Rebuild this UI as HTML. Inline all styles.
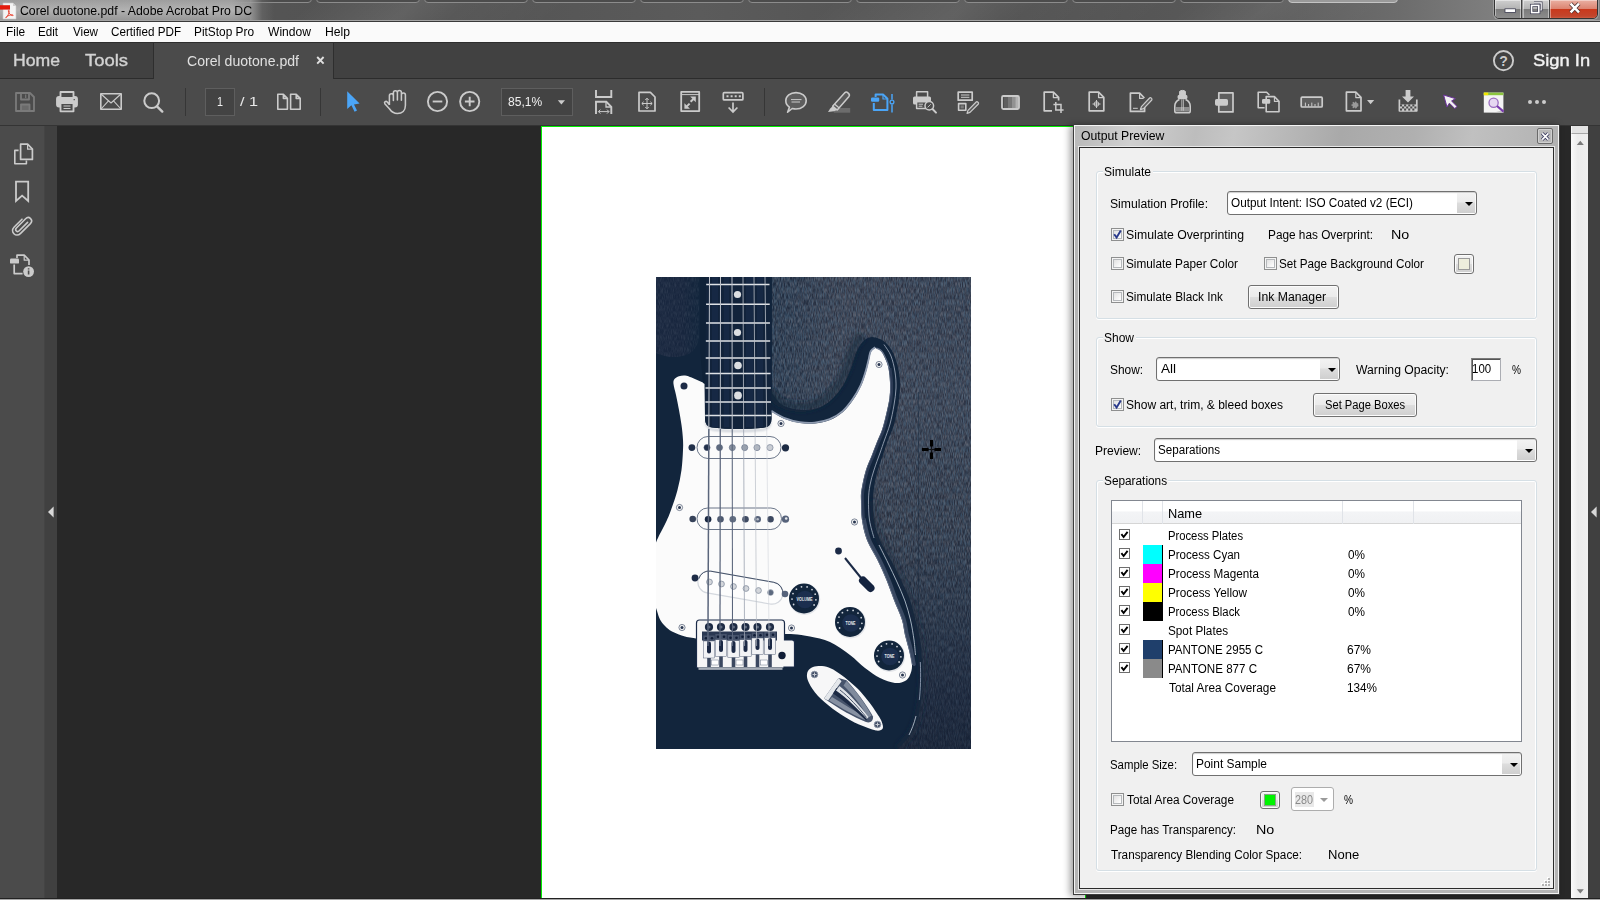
<!DOCTYPE html>
<html lang="en"><head><meta charset="utf-8"><title>Corel duotone.pdf - Adobe Acrobat Pro DC</title>
<style>
html,body{margin:0;padding:0}
body{width:1600px;height:900px;overflow:hidden;position:relative;background:#282828;font-family:"Liberation Sans",sans-serif;font-size:12px}
div,span,svg{position:absolute;box-sizing:border-box}
.t{white-space:pre;line-height:1;transform-origin:0 0}
#title{left:0;top:0;width:1600px;height:22px;background:#545454;overflow:hidden}
#title .dk{left:0;top:0;width:1600px;height:22px;background:linear-gradient(90deg,#585858 0,#525252 420px,#5b5b5b 700px,#505050 1000px,#5a5a5a 1250px,#6c6c6c 1400px,#7e7e7e 1490px,#808080 1600px)}
#title .stk{top:-10px;height:44px;background:linear-gradient(90deg,rgba(255,255,255,0),rgba(255,255,255,.09) 40%,rgba(255,255,255,.03) 60%,rgba(255,255,255,0));transform:skewX(-50deg)}
#title .ttab{top:-6px;height:9px;border:1px solid #8c8c8c;border-radius:4px;background:#4c4c4c}
#title .ttab.lt{background:#9a9a9a;border-color:#c4c4c4}
#title .glow{left:0;top:0;width:290px;height:22px;background:linear-gradient(90deg,#a6a6a6 0,#a8a8a8 232px,rgba(160,160,160,.85) 250px,rgba(120,120,120,.35) 262px,rgba(90,90,90,0) 274px);}
#title .glow:after{content:"";position:absolute;left:0;top:0;width:250px;height:22px;background:linear-gradient(rgba(0,0,0,.06),rgba(255,255,255,.12) 45%,rgba(0,0,0,.12))}
#title .ln1{left:0;top:20px;width:1600px;height:1px;background:#a4a4a4}
#title .ln2{left:0;top:21px;width:1600px;height:1px;background:#3a3a3a}
#wbtn{left:1494px;top:-1px;width:104px;height:19.500px;border:1px solid #333;border-radius:0 0 5px 5px;overflow:hidden;background:#999;box-shadow:0 0 0 1px rgba(255,255,255,.25)}
#wbtn .b1{left:0;top:0;width:27px;height:19px;background:linear-gradient(#cfcfcf,#b4b4b4 45%,#7c7c7c 50%,#8e8e8e);border-right:1px solid #444;box-shadow:inset 0 0 0 1px rgba(255,255,255,.45)}
#wbtn .b2{left:28px;top:0;width:27px;height:19px;background:linear-gradient(#cfcfcf,#b4b4b4 45%,#7c7c7c 50%,#8e8e8e);border-right:1px solid #444;box-shadow:inset 0 0 0 1px rgba(255,255,255,.45)}
#wbtn .b3{left:55px;top:0;width:48px;height:19px;background:linear-gradient(#eab0a2,#dc8572 45%,#c9391c 50%,#c2452c 85%,#d0664c);box-shadow:inset 0 0 0 1px rgba(255,255,255,.4)}
#menu{left:0;top:22px;width:1600px;height:20px;background:#fafafa}
#tabs{left:0;top:42px;width:1600px;height:37px;background:#414141;border-top:1px solid #2e2e2e;border-bottom:1px solid #2c2c2c}
#tab{left:153px;top:43px;width:181px;height:36px;background:#4b4b4b;border-left:1px solid #2e2e2e;border-right:1px solid #2e2e2e}
#tool{left:0;top:79px;width:1600px;height:47px;background:#4b4b4b;border-bottom:1px solid #343434}
.sep{width:1px;height:28px;top:88px;background:#363636}
.tbox{background:#434343;border:1px solid #5e5e5e}
#nav{left:0;top:126px;width:45px;height:772px;background:#4b4b4b;border-right:1px solid #444}
#strip{left:45px;top:126px;width:12px;height:772px;background:#404040}
#page{left:541px;top:126px;width:545px;height:772px;background:#fff;border:1px solid #00ee00;border-bottom:none}
#rstrip{left:1588px;top:126px;width:12px;height:772px;background:#404040}
#vscroll{left:1571px;top:126px;width:17px;height:772px;background:linear-gradient(90deg,#fafafa,#ececec 40%,#f0f0f0)}
#botline{left:0;top:898px;width:1600px;height:1px;background:#222}
#botline2{left:0;top:899px;width:1600px;height:1px;background:#a6a6a6}
/* panel */
#panel{left:1073px;top:124px;width:487px;height:771px;background:#b4b4b4;border:1px solid #3c3c3c;box-shadow:-3px 1px 7px rgba(0,0,0,.38)}
#panel .hi{left:0;top:0;width:485px;height:769px;border:1px solid #f4f4f4}
#ptitle{left:1px;top:1px;width:483px;height:21px;background:linear-gradient(100deg,#b9b9b9,#d0d0d0 12%,#bdbdbd 25%,#c6c6c6 33%,#a9a9a9 55%,#b0b0b0 70%,#c0c0c0 82%,#b2b2b2 100%)}
#pin{left:5px;top:22px;width:475px;height:742px;background:#f0f0f0;border:1px solid #2b2b2b;box-shadow:0 0 0 1px #e8e8e8}
.grp{border:1px solid #d5dfe5;border-radius:3px;box-shadow:inset 1px 1px 0 #fff, inset -1px 0 0 #fff, 0 1px 0 #fff}
.lbl{background:#f0f0f0;height:14px}
.combo{background:#fff;border:1px solid #707070;border-radius:3px;box-shadow:inset 0 1px 1px #ccc}
.combo .btn{right:1px;top:1px;bottom:1px;width:18px;background:linear-gradient(#f2f2f2,#ebebeb 45%,#dddddd 50%,#cfcfcf);border-left:0}
.combo .arr{right:3.5px;top:9px;width:0;height:0;border-left:4px solid transparent;border-right:4px solid transparent;border-top:4px solid #000}
.pbtn{border:1px solid #707070;border-radius:3px;background:linear-gradient(#f2f2f2,#ebebeb 48%,#dddddd 52%,#cfcfcf);box-shadow:inset 0 0 0 1px #fcfcfc}
.cb{width:13px;height:13px;border:1px solid #8e8f8f;background:linear-gradient(135deg,#d8d8d8,#fff 80%);box-shadow:inset 0 0 0 1px #f4f4f4, inset 0 0 0 2px #b5b8bb}
.cbs{width:11px;height:11px;border:1px solid #6e6e6e;background:#fff}
.inp{background:#fff;border:1px solid #abadb3;border-top-color:#7a7a7a;border-left-color:#8a8a8a;box-shadow:inset 1px 1px 0 #555}
.list{background:#fff;border:1px solid #828790}
.lhead{background:linear-gradient(#fff,#fff 45%,#f3f4f6 50%,#f0f1f3);border-bottom:1px solid #d5d5d5}
.lsep{background:#e0e3e8}
.sw{border-right:1px solid #000}
.dis{background:#fff;border-color:#adadad;box-shadow:none}
.pclose{border:1px solid #6a6a6a;border-radius:2px;background:#b9b9b9;box-shadow:inset 0 0 0 1px #d0d0d0}
#vscroll .sp{left:0;top:0;width:17px;height:8px;background:#e3e3e3;border-bottom:1px solid #a8a8a8;border-left:1px solid #f8f8f8}

</style></head>
<body>
<div id="title">
<div class="dk"></div>
<div class="stk" style="left:300px;width:260px"></div><div class="stk" style="left:820px;width:340px"></div><div class="stk" style="left:1180px;width:200px;opacity:.6"></div>
<div class="ttab" style="left:-20px;width:104px"></div><div class="ttab" style="left:88px;width:116px"></div><div class="ttab" style="left:208px;width:104px"></div><div class="ttab" style="left:316px;width:104px"></div><div class="ttab" style="left:424px;width:104px"></div><div class="ttab" style="left:532px;width:104px"></div><div class="ttab" style="left:640px;width:104px"></div><div class="ttab" style="left:748px;width:104px"></div><div class="ttab" style="left:856px;width:104px"></div><div class="ttab" style="left:964px;width:104px"></div><div class="ttab" style="left:1072px;width:104px"></div><div class="ttab" style="left:1180px;width:104px"></div><div class="ttab lt" style="left:1288px;width:110px"></div>
<div class="glow"></div>
<div class="ln1"></div><div class="ln2"></div>
<svg style="left:0;top:2px" width="18" height="18" viewBox="0 0 18 18"><path d="M3 1 H13 L16 4 V17 H3 Z" fill="#f4f4f4" stroke="#c9c9c9" stroke-width=".6"/><path d="M13 1 V4 H16 Z" fill="#d0d0d0"/><rect x="0" y="3.200" width="10" height="4.400" fill="#e31b0c"/><path d="M6.200 15.600 C8 13.600 9.400 10.800 9.200 8.800 C9 7.800 8.200 8 8.300 9 C8.600 11 10.400 13.400 12.600 13.600 C13.600 13.600 13.400 12.800 12.400 12.800 C10.400 12.800 7.600 13.600 6.200 15 C5.600 15.800 5.800 16.100 6.200 15.600 Z" fill="none" stroke="#e8402e" stroke-width=".9"/></svg>
<div id="wbtn"><div class="b1"></div><div class="b2"></div><div class="b3"></div>
<svg style="left:0;top:0" width="104" height="19" viewBox="1494 0 104 19"><rect x="1504" y="8.800" width="10.600" height="3.600" fill="#fff" stroke="#3c3c50" stroke-width=".8"/><path d="M1533 2.800 H1540.200 V10 H1538" fill="none" stroke="#3c3c50" stroke-width="2.600"/><path d="M1533 2.800 H1540.200 V10 H1538" fill="none" stroke="#fff" stroke-width="1.200"/><rect x="1530.600" y="5.400" width="7.200" height="7.200" fill="none" stroke="#3c3c50" stroke-width="3"/><rect x="1530.600" y="5.400" width="7.200" height="7.200" fill="none" stroke="#fff" stroke-width="1.600"/><path d="M1569.600 3.600 L1578 12.400 M1578 3.600 L1569.600 12.400" stroke="#4a3030" stroke-width="4"/><path d="M1569.600 3.600 L1578 12.400 M1578 3.600 L1569.600 12.400" stroke="#fff" stroke-width="2.500"/></svg></div>
</div>
<div id="menu"></div>
<div id="tabs"></div><div id="tab"></div>
<div id="tool"></div>
<div class="sep" style="left:185px"></div><div class="sep" style="left:320px"></div><div class="sep" style="left:764px"></div>
<div class="tbox" style="left:205px;top:88px;width:30px;height:28px"></div>
<div class="tbox" style="left:501px;top:88px;width:72px;height:28px"></div>
<div id="nav"></div><div id="strip"></div>
<div id="page"></div>
<svg id="guitar" style="left:656px;top:277px" width="315" height="472" viewBox="656 277 315 472" font-family="'Liberation Sans',sans-serif">
<defs>
<filter id="grain" x="0" y="0" width="100%" height="100%"><feTurbulence type="fractalNoise" baseFrequency="1.0 0.17" numOctaves="2" seed="7" result="n"/><feColorMatrix type="matrix" values="0 0 0 0 .8  0 0 0 0 .82  0 0 0 0 .86  2.4 0 0 0 -0.9" result="m"/><feComposite in="m" in2="SourceGraphic" operator="in"/></filter>
<filter id="grainD" x="0" y="0" width="100%" height="100%"><feTurbulence type="fractalNoise" baseFrequency="0.9 0.15" numOctaves="2" seed="23" result="n"/><feColorMatrix type="matrix" values="0 0 0 0 .07  0 0 0 0 .145  0 0 0 0 .235  2.4 0 0 0 -0.9" result="m"/><feComposite in="m" in2="SourceGraphic" operator="in"/></filter>
<linearGradient id="wood" x1="0" y1="0" x2="0" y2="1"><stop offset="0" stop-color="#2e3444"/><stop offset=".26" stop-color="#323848"/><stop offset=".52" stop-color="#2a303f"/><stop offset=".73" stop-color="#222c3e"/><stop offset=".9" stop-color="#1a2438"/><stop offset="1" stop-color="#172134"/></linearGradient>
<linearGradient id="woodl" x1="0" y1="0" x2="1" y2="0"><stop offset="0" stop-color="#1a2840"/><stop offset=".6" stop-color="#18263e"/><stop offset="1" stop-color="#12253c"/></linearGradient>
<linearGradient id="woodx" x1="0" y1="0" x2="1" y2="0"><stop offset="0" stop-color="#12253c" stop-opacity=".55"/><stop offset=".35" stop-color="#12253c" stop-opacity="0"/><stop offset="1" stop-color="#12253c" stop-opacity=".1"/></linearGradient>
<linearGradient id="jack" x1="0" y1="0" x2="1" y2="0"><stop offset="0" stop-color="#9aa3b2"/><stop offset=".3" stop-color="#e8eaee"/><stop offset=".45" stop-color="#4a566c"/><stop offset=".6" stop-color="#c9ced6"/><stop offset=".8" stop-color="#59657a"/><stop offset="1" stop-color="#aab2be"/></linearGradient>
<filter id="blur2" x="-20%" y="-20%" width="140%" height="140%"><feGaussianBlur stdDeviation="2.2"/></filter>
<linearGradient id="gmg" x1="0" y1="0" x2="0" y2="1"><stop offset="0" stop-color="#fff"/><stop offset=".55" stop-color="#fff"/><stop offset=".85" stop-color="#666"/><stop offset="1" stop-color="#555"/></linearGradient><mask id="gm" maskUnits="userSpaceOnUse" x="656" y="277" width="315" height="472"><rect x="656" y="277" width="315" height="472" fill="url(#gmg)"/></mask>
<filter id="blur1" x="-20%" y="-20%" width="140%" height="140%"><feGaussianBlur stdDeviation=".8"/></filter>
<clipPath id="gc"><rect x="656" y="277" width="315" height="472"/></clipPath>
</defs>
<g clip-path="url(#gc)">
<rect x="656" y="277" width="315" height="472" fill="#12253c"/>
<path d="M772 277 L772 393  C773.3 394.7 777.0 400.5 780.0 403.0 C783.0 405.5 785.8 406.8 790.0 408.0 C794.2 409.2 800.0 410.2 805.0 410.0 C810.0 409.8 815.3 409.0 820.0 407.0 C824.7 405.0 829.2 401.7 833.0 398.0 C836.8 394.3 840.2 389.7 843.0 385.0 C845.8 380.3 848.0 375.0 850.0 370.0 C852.0 365.0 853.3 359.2 855.0 355.0 C856.7 350.8 858.2 347.7 860.0 345.0 C861.8 342.3 864.0 340.3 866.0 339.0 C868.0 337.7 869.7 337.0 872.0 337.0 C874.3 337.0 877.3 337.7 880.0 339.0 C882.7 340.3 885.6 342.2 888.0 345.0 C890.4 347.8 892.7 351.5 894.5 356.0 C896.3 360.5 898.1 366.7 899.0 372.0 C899.9 377.3 900.2 382.5 900.0 388.0 C899.8 393.5 899.0 398.8 898.0 405.0 C897.0 411.2 895.7 419.2 894.0 425.0 C892.3 430.8 889.7 435.5 888.0 440.0 C886.3 444.5 885.7 447.0 884.0 452.0 C882.3 457.0 879.6 464.5 878.0 470.0 C876.4 475.5 875.3 480.0 874.5 485.0 C873.7 490.0 873.1 494.2 873.0 500.0 C872.9 505.8 872.8 513.3 874.0 520.0 C875.2 526.7 877.2 533.3 880.0 540.0 C882.8 546.7 887.5 553.3 891.0 560.0 C894.5 566.7 897.8 573.3 901.0 580.0 C904.2 586.7 907.6 593.3 910.0 600.0 C912.4 606.7 913.8 613.3 915.5 620.0 C917.2 626.7 918.9 633.3 920.0 640.0 C921.1 646.7 921.6 653.3 922.0 660.0 C922.4 666.7 922.7 673.3 922.5 680.0 C922.3 686.7 921.9 693.3 921.0 700.0 C920.1 706.7 918.8 714.2 917.0 720.0 C915.2 725.8 913.2 730.2 910.0 735.0 C906.8 739.8 900.0 746.7 898.0 749.0 L971 749 L971 277 Z" fill="url(#wood)"/>
<path d="M772 277 L772 393  C773.3 394.7 777.0 400.5 780.0 403.0 C783.0 405.5 785.8 406.8 790.0 408.0 C794.2 409.2 800.0 410.2 805.0 410.0 C810.0 409.8 815.3 409.0 820.0 407.0 C824.7 405.0 829.2 401.7 833.0 398.0 C836.8 394.3 840.2 389.7 843.0 385.0 C845.8 380.3 848.0 375.0 850.0 370.0 C852.0 365.0 853.3 359.2 855.0 355.0 C856.7 350.8 858.2 347.7 860.0 345.0 C861.8 342.3 864.0 340.3 866.0 339.0 C868.0 337.7 869.7 337.0 872.0 337.0 C874.3 337.0 877.3 337.7 880.0 339.0 C882.7 340.3 885.6 342.2 888.0 345.0 C890.4 347.8 892.7 351.5 894.5 356.0 C896.3 360.5 898.1 366.7 899.0 372.0 C899.9 377.3 900.2 382.5 900.0 388.0 C899.8 393.5 899.0 398.8 898.0 405.0 C897.0 411.2 895.7 419.2 894.0 425.0 C892.3 430.8 889.7 435.5 888.0 440.0 C886.3 444.5 885.7 447.0 884.0 452.0 C882.3 457.0 879.6 464.5 878.0 470.0 C876.4 475.5 875.3 480.0 874.5 485.0 C873.7 490.0 873.1 494.2 873.0 500.0 C872.9 505.8 872.8 513.3 874.0 520.0 C875.2 526.7 877.2 533.3 880.0 540.0 C882.8 546.7 887.5 553.3 891.0 560.0 C894.5 566.7 897.8 573.3 901.0 580.0 C904.2 586.7 907.6 593.3 910.0 600.0 C912.4 606.7 913.8 613.3 915.5 620.0 C917.2 626.7 918.9 633.3 920.0 640.0 C921.1 646.7 921.6 653.3 922.0 660.0 C922.4 666.7 922.7 673.3 922.5 680.0 C922.3 686.7 921.9 693.3 921.0 700.0 C920.1 706.7 918.8 714.2 917.0 720.0 C915.2 725.8 913.2 730.2 910.0 735.0 C906.8 739.8 900.0 746.7 898.0 749.0 L971 749 L971 277 Z" fill="url(#woodx)"/>
<path d="M656 277 L699 277 L699 338 C697 350 690 355 680 356.5 C670 358 662 356 656 353 Z" fill="url(#woodl)"/>
<g opacity=".26" mask="url(#gm)"><path d="M772 277 L772 393  C773.3 394.7 777.0 400.5 780.0 403.0 C783.0 405.5 785.8 406.8 790.0 408.0 C794.2 409.2 800.0 410.2 805.0 410.0 C810.0 409.8 815.3 409.0 820.0 407.0 C824.7 405.0 829.2 401.7 833.0 398.0 C836.8 394.3 840.2 389.7 843.0 385.0 C845.8 380.3 848.0 375.0 850.0 370.0 C852.0 365.0 853.3 359.2 855.0 355.0 C856.7 350.8 858.2 347.7 860.0 345.0 C861.8 342.3 864.0 340.3 866.0 339.0 C868.0 337.7 869.7 337.0 872.0 337.0 C874.3 337.0 877.3 337.7 880.0 339.0 C882.7 340.3 885.6 342.2 888.0 345.0 C890.4 347.8 892.7 351.5 894.5 356.0 C896.3 360.5 898.1 366.7 899.0 372.0 C899.9 377.3 900.2 382.5 900.0 388.0 C899.8 393.5 899.0 398.8 898.0 405.0 C897.0 411.2 895.7 419.2 894.0 425.0 C892.3 430.8 889.7 435.5 888.0 440.0 C886.3 444.5 885.7 447.0 884.0 452.0 C882.3 457.0 879.6 464.5 878.0 470.0 C876.4 475.5 875.3 480.0 874.5 485.0 C873.7 490.0 873.1 494.2 873.0 500.0 C872.9 505.8 872.8 513.3 874.0 520.0 C875.2 526.7 877.2 533.3 880.0 540.0 C882.8 546.7 887.5 553.3 891.0 560.0 C894.5 566.7 897.8 573.3 901.0 580.0 C904.2 586.7 907.6 593.3 910.0 600.0 C912.4 606.7 913.8 613.3 915.5 620.0 C917.2 626.7 918.9 633.3 920.0 640.0 C921.1 646.7 921.6 653.3 922.0 660.0 C922.4 666.7 922.7 673.3 922.5 680.0 C922.3 686.7 921.9 693.3 921.0 700.0 C920.1 706.7 918.8 714.2 917.0 720.0 C915.2 725.8 913.2 730.2 910.0 735.0 C906.8 739.8 900.0 746.7 898.0 749.0 L971 749 L971 277 Z" fill="#fff" filter="url(#grain)"/></g>
<g opacity=".5" mask="url(#gm)"><path d="M772 277 L772 393  C773.3 394.7 777.0 400.5 780.0 403.0 C783.0 405.5 785.8 406.8 790.0 408.0 C794.2 409.2 800.0 410.2 805.0 410.0 C810.0 409.8 815.3 409.0 820.0 407.0 C824.7 405.0 829.2 401.7 833.0 398.0 C836.8 394.3 840.2 389.7 843.0 385.0 C845.8 380.3 848.0 375.0 850.0 370.0 C852.0 365.0 853.3 359.2 855.0 355.0 C856.7 350.8 858.2 347.7 860.0 345.0 C861.8 342.3 864.0 340.3 866.0 339.0 C868.0 337.7 869.7 337.0 872.0 337.0 C874.3 337.0 877.3 337.7 880.0 339.0 C882.7 340.3 885.6 342.2 888.0 345.0 C890.4 347.8 892.7 351.5 894.5 356.0 C896.3 360.5 898.1 366.7 899.0 372.0 C899.9 377.3 900.2 382.5 900.0 388.0 C899.8 393.5 899.0 398.8 898.0 405.0 C897.0 411.2 895.7 419.2 894.0 425.0 C892.3 430.8 889.7 435.5 888.0 440.0 C886.3 444.5 885.7 447.0 884.0 452.0 C882.3 457.0 879.6 464.5 878.0 470.0 C876.4 475.5 875.3 480.0 874.5 485.0 C873.7 490.0 873.1 494.2 873.0 500.0 C872.9 505.8 872.8 513.3 874.0 520.0 C875.2 526.7 877.2 533.3 880.0 540.0 C882.8 546.7 887.5 553.3 891.0 560.0 C894.5 566.7 897.8 573.3 901.0 580.0 C904.2 586.7 907.6 593.3 910.0 600.0 C912.4 606.7 913.8 613.3 915.5 620.0 C917.2 626.7 918.9 633.3 920.0 640.0 C921.1 646.7 921.6 653.3 922.0 660.0 C922.4 666.7 922.7 673.3 922.5 680.0 C922.3 686.7 921.9 693.3 921.0 700.0 C920.1 706.7 918.8 714.2 917.0 720.0 C915.2 725.8 913.2 730.2 910.0 735.0 C906.8 739.8 900.0 746.7 898.0 749.0 L971 749 L971 277 Z" fill="#fff" filter="url(#grainD)"/></g>
<g opacity=".09"><path d="M656 277 L699 277 L699 338 C697 350 690 355 680 356.5 C670 358 662 356 656 353 Z" fill="#fff" filter="url(#grain)"/></g>
<path d="M918.5 392 V749" stroke="#12253c" stroke-opacity=".4" stroke-width="1"/>
<path d="M938.500 277 V749" stroke="#12253c" stroke-opacity=".15" stroke-width="1"/>
<path d="M873 500 C873.2 503.3 872.8 513.3 874.0 520.0 C875.2 526.7 877.2 533.3 880.0 540.0 C882.8 546.7 887.5 553.3 891.0 560.0 C894.5 566.7 897.8 573.3 901.0 580.0 C904.2 586.7 907.6 593.3 910.0 600.0 C912.4 606.7 913.8 613.3 915.5 620.0 C917.2 626.7 918.9 633.3 920.0 640.0 C921.1 646.7 921.6 653.3 922.0 660.0 C922.4 666.7 922.7 673.3 922.5 680.0 C922.3 686.7 921.9 693.3 921.0 700.0 C920.1 706.7 918.8 714.2 917.0 720.0 C915.2 725.8 913.2 730.2 910.0 735.0 C906.8 739.8 900.0 746.7 898.0 749.0" fill="none" stroke="#12253c" stroke-opacity=".35" stroke-width="9" filter="url(#blur2)"/>
<path d="M769 390 C770.3 391.7 774.0 397.5 777.0 400.0 C780.0 402.5 782.8 403.8 787.0 405.0 C791.2 406.2 797.0 407.2 802.0 407.0 C807.0 406.8 812.3 406.0 817.0 404.0 C821.7 402.0 826.2 398.7 830.0 395.0 C833.8 391.3 837.2 386.7 840.0 382.0 C842.8 377.3 845.0 372.0 847.0 367.0 C849.0 362.0 850.3 356.2 852.0 352.0 C853.7 347.8 855.2 344.7 857.0 342.0 C858.8 339.3 862.0 337.0 863.0 336.0" fill="none" stroke="#12253c" stroke-opacity=".55" stroke-width="10" filter="url(#blur2)"/>
<path d="M704.5 383.3 L705 419 Q705 426.5 712 427.6 Q738 430.6 764.5 427.6 Q771.5 426.5 771.5 419 L771.5 411.8  C773.8 413.0 780.2 417.1 785.0 419.0 C789.8 420.9 795.0 422.2 800.0 423.0 C805.0 423.8 810.0 424.0 815.0 423.5 C820.0 423.0 825.3 421.9 830.0 420.0 C834.7 418.1 839.2 415.3 843.0 412.0 C846.8 408.7 850.0 404.3 853.0 400.0 C856.0 395.7 858.8 390.7 861.0 386.0 C863.2 381.3 864.7 376.3 866.0 372.0 C867.3 367.7 868.2 363.3 869.0 360.0 C869.8 356.7 869.9 354.0 871.0 352.0 C872.1 350.0 873.8 348.2 875.5 348.0 C877.2 347.8 879.4 349.3 881.0 351.0 C882.6 352.7 883.8 355.2 885.0 358.0 C886.2 360.8 887.7 364.0 888.5 368.0 C889.3 372.0 889.8 377.0 890.0 382.0 C890.2 387.0 890.2 392.5 889.5 398.0 C888.8 403.5 887.2 409.7 886.0 415.0 C884.8 420.3 883.5 425.5 882.0 430.0 C880.5 434.5 878.7 437.8 877.0 442.0 C875.3 446.2 873.8 450.3 872.0 455.0 C870.2 459.7 867.8 464.2 866.0 470.0 C864.2 475.8 862.3 485.0 861.5 490.0 C860.7 495.0 860.9 495.0 861.0 500.0 C861.1 505.0 861.0 513.3 862.0 520.0 C863.0 526.7 864.4 533.3 867.0 540.0 C869.6 546.7 874.2 553.3 877.5 560.0 C880.8 566.7 883.8 573.3 886.5 580.0 C889.2 586.7 891.4 593.3 894.0 600.0 C896.6 606.7 900.2 614.2 902.0 620.0 C903.8 625.8 903.8 630.0 905.0 635.0 C906.2 640.0 907.8 645.0 909.0 650.0 C910.2 655.0 911.8 660.8 912.0 665.0 C912.2 669.2 911.2 672.3 910.0 675.0 C908.8 677.7 907.5 679.7 905.0 681.0 C902.5 682.3 899.2 683.5 895.0 683.0 C890.8 682.5 885.0 680.5 880.0 678.0 C875.0 675.5 870.0 671.8 865.0 668.0 C860.0 664.2 855.8 659.3 850.0 655.0 C844.2 650.7 836.7 645.1 830.0 642.0 C823.3 638.9 816.0 637.8 810.0 636.5 C804.0 635.2 798.3 634.6 794.0 634.2 C789.7 633.8 785.7 634.0 784.0 634.0 L697 638.5  C695.0 638.2 689.2 637.7 685.0 636.5 C680.8 635.3 675.3 633.2 672.0 631.5 C668.7 629.8 667.0 628.0 665.0 626.0 C663.0 624.0 661.3 622.0 660.0 619.5 C658.7 617.0 658.0 613.9 657.0 611.0 C656.0 608.1 654.5 603.5 654.0 602.0 L654 548  C654.5 546.7 655.7 543.0 657.0 540.0 C658.3 537.0 660.3 533.3 662.0 530.0 C663.7 526.7 665.5 523.3 667.0 520.0 C668.5 516.7 669.2 515.0 671.0 510.0 C672.8 505.0 675.8 496.7 677.5 490.0 C679.2 483.3 680.6 476.7 681.5 470.0 C682.4 463.3 682.8 455.0 683.0 450.0 C683.2 445.0 683.2 444.2 683.0 440.0 C682.8 435.8 682.2 430.0 681.5 425.0 C680.8 420.0 679.9 415.0 679.0 410.0 C678.1 405.0 676.9 399.3 676.0 395.0 C675.1 390.7 673.8 386.7 673.5 384.0 C673.2 381.3 673.6 380.3 674.5 379.0 C675.4 377.7 677.2 376.8 679.0 376.2 C680.8 375.6 683.0 375.3 685.0 375.5 C687.0 375.7 690.0 377.0 691.0 377.3 Z" fill="#fbfbfb"/>
<path d="M771.2 410.9 C773.5 412.1 780.0 416.2 784.7 418.1 C789.5 420.0 794.7 421.4 799.7 422.1 C804.7 422.9 809.7 423.1 814.7 422.6 C819.7 422.1 825.0 421.0 829.7 419.1 C834.4 417.2 838.9 414.4 842.7 411.1 C846.5 407.8 849.7 403.4 852.7 399.1 C855.7 394.8 858.5 389.8 860.7 385.1 C862.9 380.4 864.4 375.4 865.7 371.1 C867.0 366.8 867.9 362.4 868.7 359.1 C869.5 355.8 869.6 353.1 870.7 351.1 C871.8 349.1 874.5 347.8 875.2 347.1" fill="none" stroke="#8f9bb0" stroke-width="1.8"/>
<path d="M876.1 348 C877.0 348.5 880.0 349.3 881.6 351.0 C883.2 352.7 884.4 355.2 885.6 358.0 C886.9 360.8 888.3 364.0 889.1 368.0 C889.9 372.0 890.4 377.0 890.6 382.0 C890.8 387.0 890.8 392.5 890.1 398.0 C889.4 403.5 887.9 409.7 886.6 415.0 C885.4 420.3 884.1 425.5 882.6 430.0 C881.1 434.5 879.3 437.8 877.6 442.0 C875.9 446.2 874.4 450.3 872.6 455.0 C870.8 459.7 868.4 464.2 866.6 470.0 C864.9 475.8 862.9 485.0 862.1 490.0 C861.3 495.0 861.5 495.0 861.6 500.0 C861.7 505.0 861.6 513.3 862.6 520.0 C863.6 526.7 865.0 533.3 867.6 540.0 C870.2 546.7 874.9 553.3 878.1 560.0 C881.4 566.7 884.4 573.3 887.1 580.0 C889.9 586.7 892.0 593.3 894.6 600.0 C897.2 606.7 900.8 614.2 902.6 620.0 C904.4 625.8 904.4 630.0 905.6 635.0 C906.8 640.0 908.4 645.0 909.6 650.0 C910.8 655.0 912.1 662.5 912.6 665.0" fill="none" stroke="#66738b" stroke-width="1.3"/>
<path d="M864.2 519.4 C865.0 522.7 866.6 532.7 869.2 539.4 C871.8 546.1 876.5 552.7 879.7 559.4 C883.0 566.1 886.0 572.7 888.7 579.4 C891.5 586.1 893.6 592.7 896.2 599.4 C898.8 606.1 902.4 613.6 904.2 619.4 C906.0 625.2 906.0 629.4 907.2 634.4 C908.4 639.4 910.0 644.4 911.2 649.4 C912.4 654.4 913.7 661.9 914.2 664.4" fill="none" stroke="#3a4962" stroke-width="3.2" stroke-linecap="round"/>
<path d="M890.3 368 C890.5 370.3 891.6 377.0 891.8 382.0 C892.0 387.0 892.0 392.5 891.3 398.0 C890.6 403.5 889.0 409.7 887.8 415.0 C886.5 420.3 885.3 425.5 883.8 430.0 C882.3 434.5 880.5 437.8 878.8 442.0 C877.1 446.2 875.6 450.3 873.8 455.0 C872.0 459.7 869.5 464.2 867.8 470.0 C866.0 475.8 864.1 485.0 863.3 490.0 C862.5 495.0 862.7 495.0 862.8 500.0 C862.9 505.0 863.6 516.7 863.8 520.0" fill="none" stroke="#2c3b55" stroke-width="2.4"/>
<path d="M884 344.5 C885.2 346.4 889.2 351.4 891.0 356.0 C892.8 360.6 894.2 366.7 895.0 372.0 C895.8 377.3 896.2 382.5 896.0 388.0 C895.8 393.5 895.0 399.0 894.0 405.0 C893.0 411.0 891.6 418.2 890.0 424.0 C888.4 429.8 886.2 435.2 884.5 440.0 C882.8 444.8 881.8 448.0 880.0 453.0 C878.2 458.0 875.7 464.7 874.0 470.0 C872.3 475.3 870.9 480.0 870.0 485.0 C869.1 490.0 868.6 494.2 868.5 500.0 C868.4 505.8 868.6 513.7 869.5 520.0 C870.4 526.3 873.2 535.0 874.0 538.0" fill="none" stroke="#aab4c4" stroke-width=".8"/>
<path d="M879 545 C880.5 548.0 885.0 556.8 888.0 563.0 C891.0 569.2 894.2 575.7 897.0 582.0 C899.8 588.3 902.8 594.7 905.0 601.0 C907.2 607.3 909.0 613.5 910.5 620.0 C912.0 626.5 913.2 634.2 914.0 640.0 C914.8 645.8 915.2 652.5 915.5 655.0" fill="none" stroke="#c8d0dc" stroke-width=".8"/>
<path d="M920.3 662 C921 676 920.5 690 919.3 700" fill="none" stroke="#8f9bb0" stroke-width=".9"/>
<path d="M916 716 C914 724 911.5 730 909 735" fill="none" stroke="#c8d0dc" stroke-width=".8"/>
<path d="M706 421 Q706 428.500 713 429.600 Q738 432.600 763.500 429.600 Q770.500 428.500 770.500 421" fill="none" stroke="#8a94a6" stroke-opacity=".5" stroke-width="1.600" filter="url(#blur1)"/>
<path d="M706 277 L770 277 L771.5 419 Q771.5 426.5 764.5 427.6 Q738 430.6 712 427.6 Q705 426.5 705 419 Z" fill="#12233b"/>
<path d="M700 277 L706 277 L705 384 L703 383 L700 350 Z" fill="#0f2137"/>
<rect x="712" y="277" width="6" height="150" fill="#22355a" opacity=".3"/>
<rect x="724" y="277" width="5" height="150" fill="#22355a" opacity=".3"/>
<rect x="746" y="277" width="7" height="150" fill="#22355a" opacity=".3"/>
<rect x="757" y="277" width="6" height="150" fill="#22355a" opacity=".3"/>
<line x1="706.2" y1="284.5" x2="769.5" y2="284.5" stroke="#dfe2e6" stroke-width="1.55"/>
<line x1="706.08" y1="304.3" x2="769.72" y2="304.3" stroke="#dfe2e6" stroke-width="1.55"/>
<line x1="705.96" y1="323" x2="769.94" y2="323" stroke="#dfe2e6" stroke-width="1.55"/>
<line x1="705.84" y1="341" x2="770.16" y2="341" stroke="#dfe2e6" stroke-width="1.55"/>
<line x1="705.72" y1="358" x2="770.38" y2="358" stroke="#dfe2e6" stroke-width="1.55"/>
<line x1="705.6" y1="373.5" x2="770.6" y2="373.5" stroke="#dfe2e6" stroke-width="1.55"/>
<line x1="705.48" y1="388" x2="770.82" y2="388" stroke="#dfe2e6" stroke-width="1.55"/>
<line x1="705.36" y1="402" x2="771.04" y2="402" stroke="#dfe2e6" stroke-width="1.55"/>
<line x1="705.24" y1="415.5" x2="771.26" y2="415.5" stroke="#dfe2e6" stroke-width="1.55"/>
<circle cx="737.5" cy="294.5" r="3.6" fill="#dcdee1"/>
<circle cx="737.5" cy="332.5" r="3.6" fill="#dcdee1"/>
<circle cx="738" cy="365.5" r="3.8" fill="#dcdee1"/>
<circle cx="738" cy="395.5" r="3.9" fill="#dcdee1"/>
<rect x="697" y="436.5" width="84" height="22" rx="11" fill="none" stroke="#46546c" stroke-width=".8"/>
<circle cx="707" cy="447.6" r="3.1" fill="#22314b" stroke="#55617a" stroke-width=".5"/>
<circle cx="719.5" cy="447.6" r="3.1" fill="#5e6a7e" stroke="#55617a" stroke-width=".5"/>
<circle cx="732.3" cy="447.6" r="3.1" fill="#87909f" stroke="#55617a" stroke-width=".5"/>
<circle cx="744.7" cy="447.6" r="3.1" fill="#98a0ad" stroke="#55617a" stroke-width=".5"/>
<circle cx="757" cy="447.6" r="3.1" fill="#b0b6c0" stroke="#55617a" stroke-width=".5"/>
<circle cx="770" cy="447.6" r="3.1" fill="#c9cdd4" stroke="#55617a" stroke-width=".5"/>
<circle cx="691.9" cy="447.6" r="3.4" fill="#22314b"/>
<circle cx="785.5" cy="447.8" r="3.6" fill="#1d2b44"/>
<rect x="697" y="508" width="84.500" height="21.5" rx="10.7" fill="none" stroke="#46546c" stroke-width=".8"/>
<circle cx="708.1" cy="519.2" r="3.3" fill="#1a2842"/>
<circle cx="720.5" cy="519.2" r="3.3" fill="#4d596f"/>
<circle cx="732.8" cy="519.2" r="3.3" fill="#626e82"/>
<circle cx="745.5" cy="519.2" r="3.3" fill="#3f4b63"/>
<circle cx="757.7" cy="519.2" r="3.3" fill="#56627a"/>
<circle cx="770.5" cy="519.2" r="3.3" fill="#3c4860"/>
<circle cx="757.700" cy="519.2" r="1.2" fill="#b8bec8"/>
<circle cx="692.7" cy="519" r="3.3" fill="#364259"/>
<circle cx="785.5" cy="519.2" r="3.6" fill="#56627a"/>
<circle cx="786.200" cy="518.500" r="1.300" fill="#e6e8ec"/>
<g transform="rotate(10 740 587)"><rect x="697.5" y="576.5" width="86" height="22" rx="11" fill="#fdfdfd" stroke="#d4d8de" stroke-width="1.2"/><path d="M698 586 A10.5 10.5 0 0 1 708.5 576.5 L772.5 576.5 A11 11 0 0 1 783.5 587.5" fill="none" stroke="#3e4c64" stroke-width=".9"/></g>
<circle cx="709.5" cy="582" r="2.9" fill="#d3d6db" stroke="#7a8596" stroke-width=".7"/>
<circle cx="721.5" cy="584" r="2.9" fill="#d3d6db" stroke="#7a8596" stroke-width=".7"/>
<circle cx="733.5" cy="586.5" r="2.9" fill="#d3d6db" stroke="#7a8596" stroke-width=".7"/>
<circle cx="746" cy="588.5" r="2.9" fill="#d3d6db" stroke="#7a8596" stroke-width=".7"/>
<circle cx="758.5" cy="590.5" r="2.9" fill="#d3d6db" stroke="#7a8596" stroke-width=".7"/>
<circle cx="770.5" cy="592.5" r="2.9" fill="#d3d6db" stroke="#7a8596" stroke-width=".7"/>
<circle cx="770.5" cy="592.5" r="2.6" fill="#5d6a80"/>
<circle cx="695" cy="578" r="3.4" fill="#1d2b46"/>
<circle cx="785" cy="594" r="3.3" fill="#55627a"/>
<circle cx="684" cy="386" r="3.5" fill="#1d2b46"/>
<circle cx="781" cy="423.5" r="3.1" fill="#f4f4f4" stroke="#4a5870" stroke-width=".7"/><circle cx="781" cy="423.5" r="1.5" fill="#27354f"/>
<circle cx="879" cy="364.5" r="3.1" fill="#f4f4f4" stroke="#4a5870" stroke-width=".7"/><circle cx="879" cy="364.5" r="1.5" fill="#27354f"/>
<circle cx="679.5" cy="507.5" r="3.1" fill="#f4f4f4" stroke="#4a5870" stroke-width=".7"/><circle cx="679.5" cy="507.5" r="1.5" fill="#27354f"/>
<circle cx="854.5" cy="522" r="3.1" fill="#f4f4f4" stroke="#4a5870" stroke-width=".7"/><circle cx="854.5" cy="522" r="1.5" fill="#27354f"/>
<circle cx="682" cy="627.5" r="3.1" fill="#f4f4f4" stroke="#4a5870" stroke-width=".7"/><circle cx="682" cy="627.5" r="1.5" fill="#27354f"/>
<circle cx="791.5" cy="628" r="3.1" fill="#f4f4f4" stroke="#4a5870" stroke-width=".7"/><circle cx="791.5" cy="628" r="1.5" fill="#27354f"/>
<circle cx="902.5" cy="675" r="3.1" fill="#f4f4f4" stroke="#4a5870" stroke-width=".7"/><circle cx="902.5" cy="675" r="1.5" fill="#27354f"/>
<circle cx="804.6" cy="599.3" r="15.6" fill="#e3e5e9"/>
<circle cx="804" cy="598.5" r="15" fill="#12253c"/>
<circle cx="805" cy="599.5" r="8.8" fill="#1b2e4e"/>
<circle cx="793.6" cy="604.5" r=".9" fill="#cfd4dc"/>
<circle cx="792.0" cy="599.1" r=".9" fill="#cfd4dc"/>
<circle cx="793.0" cy="593.6" r=".9" fill="#cfd4dc"/>
<circle cx="796.4" cy="589.2" r=".9" fill="#cfd4dc"/>
<circle cx="801.5" cy="586.8" r=".9" fill="#cfd4dc"/>
<circle cx="807.1" cy="586.9" r=".9" fill="#cfd4dc"/>
<circle cx="812.0" cy="589.6" r=".9" fill="#cfd4dc"/>
<circle cx="815.2" cy="594.2" r=".9" fill="#cfd4dc"/>
<circle cx="815.9" cy="599.8" r=".9" fill="#cfd4dc"/>
<circle cx="814.1" cy="605.0" r=".9" fill="#cfd4dc"/>
<text x="804.5" y="601.3" font-size="4.6" fill="#e6e8ec" text-anchor="middle" font-weight="700" textLength="16" lengthAdjust="spacingAndGlyphs">VOLUME</text>
<circle cx="850.6" cy="622.8" r="15.6" fill="#e3e5e9"/>
<circle cx="850" cy="622" r="15" fill="#12253c"/>
<circle cx="851" cy="623" r="8.8" fill="#1b2e4e"/>
<circle cx="839.6" cy="628.0" r=".9" fill="#cfd4dc"/>
<circle cx="838.0" cy="622.6" r=".9" fill="#cfd4dc"/>
<circle cx="839.0" cy="617.1" r=".9" fill="#cfd4dc"/>
<circle cx="842.4" cy="612.7" r=".9" fill="#cfd4dc"/>
<circle cx="847.5" cy="610.3" r=".9" fill="#cfd4dc"/>
<circle cx="853.1" cy="610.4" r=".9" fill="#cfd4dc"/>
<circle cx="858.0" cy="613.1" r=".9" fill="#cfd4dc"/>
<circle cx="861.2" cy="617.7" r=".9" fill="#cfd4dc"/>
<circle cx="861.9" cy="623.3" r=".9" fill="#cfd4dc"/>
<circle cx="860.1" cy="628.5" r=".9" fill="#cfd4dc"/>
<text x="850.5" y="624.8" font-size="5" fill="#e6e8ec" text-anchor="middle" font-weight="700" textLength="10" lengthAdjust="spacingAndGlyphs">TONE</text>
<circle cx="889.6" cy="656.3" r="15.6" fill="#e3e5e9"/>
<circle cx="889" cy="655.5" r="15" fill="#12253c"/>
<circle cx="890" cy="656.5" r="8.8" fill="#1b2e4e"/>
<circle cx="878.6" cy="661.5" r=".9" fill="#cfd4dc"/>
<circle cx="877.0" cy="656.1" r=".9" fill="#cfd4dc"/>
<circle cx="878.0" cy="650.6" r=".9" fill="#cfd4dc"/>
<circle cx="881.4" cy="646.2" r=".9" fill="#cfd4dc"/>
<circle cx="886.5" cy="643.8" r=".9" fill="#cfd4dc"/>
<circle cx="892.1" cy="643.9" r=".9" fill="#cfd4dc"/>
<circle cx="897.0" cy="646.6" r=".9" fill="#cfd4dc"/>
<circle cx="900.2" cy="651.2" r=".9" fill="#cfd4dc"/>
<circle cx="900.9" cy="656.8" r=".9" fill="#cfd4dc"/>
<circle cx="899.1" cy="662.0" r=".9" fill="#cfd4dc"/>
<text x="889.5" y="658.3" font-size="5" fill="#e6e8ec" text-anchor="middle" font-weight="700" textLength="10" lengthAdjust="spacingAndGlyphs">TONE</text>
<circle cx="838.5" cy="551" r="3.4" fill="#1b2a46"/>
<line x1="845" y1="558" x2="861.5" y2="578.5" stroke="#1b2a46" stroke-width="2"/>
<line x1="863" y1="580.5" x2="870.5" y2="588" stroke="#14233f" stroke-width="8" stroke-linecap="round"/>
<path d="M699.5 620 L781.5 620 Q784.5 620 784.5 623 L784.5 640 L792 640 Q794.5 640 794.5 642.5 L794.5 667 L784 667 L784 669.5 L698 669.5 L696.5 667 L696.5 623 Q696.5 620 699.5 620 Z" fill="#f6f6f6" stroke="#1a2a48" stroke-width="1.2"/>
<rect x="697" y="667.5" width="98" height="3" fill="#12253c"/>
<rect x="698.5" y="668.3" width="84" height="1.3" fill="#e8eaee"/>
<rect x="702" y="631.5" width="75" height="9" fill="#2a3852"/>
<circle cx="709" cy="627" r="4.1" fill="#1d2b44"/><circle cx="709" cy="627" r="1.5" fill="#5f6b80"/>
<rect x="703.3" y="641" width="11.4" height="17" fill="#f2f3f5" stroke="#5a667c" stroke-width=".5"/>
<rect x="703.3" y="635.5" width="11.4" height="5.5" fill="#46536b"/>
<circle cx="706" cy="638.2" r="1.3" fill="#101d36"/><circle cx="712" cy="638.2" r="1.3" fill="#101d36"/>
<rect x="707" y="641.5" width="4" height="12" rx="2" fill="#1a2844"/>
<rect x="707.2" y="658" width="3.6" height="9" fill="#3b4860"/>
<circle cx="721" cy="627" r="4.1" fill="#1d2b44"/><circle cx="721" cy="627" r="1.5" fill="#5f6b80"/>
<rect x="715.3" y="639.5" width="11.4" height="17" fill="#f2f3f5" stroke="#5a667c" stroke-width=".5"/>
<rect x="715.3" y="634" width="11.4" height="5.5" fill="#46536b"/>
<circle cx="718" cy="636.7" r="1.3" fill="#101d36"/><circle cx="724" cy="636.7" r="1.3" fill="#101d36"/>
<rect x="719" y="640" width="4" height="12" rx="2" fill="#1a2844"/>
<rect x="719.2" y="656.5" width="3.6" height="10.5" fill="#3b4860"/>
<circle cx="733.5" cy="627" r="4.1" fill="#1d2b44"/><circle cx="733.5" cy="627" r="1.5" fill="#5f6b80"/>
<rect x="727.8" y="640.5" width="11.4" height="17" fill="#f2f3f5" stroke="#5a667c" stroke-width=".5"/>
<rect x="727.8" y="635" width="11.4" height="5.5" fill="#46536b"/>
<circle cx="730.5" cy="637.7" r="1.3" fill="#101d36"/><circle cx="736.5" cy="637.7" r="1.3" fill="#101d36"/>
<rect x="731.5" y="641" width="4" height="12" rx="2" fill="#1a2844"/>
<rect x="731.7" y="657.5" width="3.6" height="9.5" fill="#3b4860"/>
<circle cx="745.5" cy="627" r="4.1" fill="#1d2b44"/><circle cx="745.5" cy="627" r="1.5" fill="#5f6b80"/>
<rect x="739.8" y="639.5" width="11.4" height="17" fill="#f2f3f5" stroke="#5a667c" stroke-width=".5"/>
<rect x="739.8" y="634" width="11.4" height="5.5" fill="#46536b"/>
<circle cx="742.5" cy="636.7" r="1.3" fill="#101d36"/><circle cx="748.5" cy="636.7" r="1.3" fill="#101d36"/>
<rect x="743.5" y="640" width="4" height="12" rx="2" fill="#1a2844"/>
<rect x="743.7" y="656.5" width="3.6" height="10.5" fill="#3b4860"/>
<circle cx="757.5" cy="627" r="4.1" fill="#1d2b44"/><circle cx="757.5" cy="627" r="1.5" fill="#5f6b80"/>
<rect x="751.8" y="638" width="11.4" height="16.5" fill="#f2f3f5" stroke="#5a667c" stroke-width=".5"/>
<rect x="751.8" y="632.5" width="11.4" height="5.5" fill="#46536b"/>
<circle cx="754.5" cy="635.2" r="1.3" fill="#101d36"/><circle cx="760.5" cy="635.2" r="1.3" fill="#101d36"/>
<rect x="755.5" y="638.5" width="4" height="11.5" rx="2" fill="#1a2844"/>
<rect x="755.7" y="654.5" width="3.6" height="12.5" fill="#3b4860"/>
<circle cx="770" cy="627" r="4.1" fill="#1d2b44"/><circle cx="770" cy="627" r="1.5" fill="#5f6b80"/>
<rect x="764.3" y="637.5" width="11.4" height="17" fill="#f2f3f5" stroke="#5a667c" stroke-width=".5"/>
<rect x="764.3" y="632" width="11.4" height="5.5" fill="#46536b"/>
<circle cx="767" cy="634.7" r="1.3" fill="#101d36"/><circle cx="773" cy="634.7" r="1.3" fill="#101d36"/>
<rect x="768" y="638" width="4" height="12" rx="2" fill="#1a2844"/>
<rect x="768.2" y="654.5" width="3.6" height="12.5" fill="#3b4860"/>
<rect x="711.5" y="660" width="7" height="5" fill="#fff" stroke="#6a7588" stroke-width=".5"/>
<rect x="736" y="660" width="7" height="5" fill="#fff" stroke="#6a7588" stroke-width=".5"/>
<rect x="760.5" y="660" width="7" height="5" fill="#fff" stroke="#6a7588" stroke-width=".5"/>
<circle cx="782" cy="655.5" r="3.7" fill="#101d36"/>
<line x1="709.5" y1="277" x2="708.854" y2="429" stroke="#bcc1ca" stroke-width="1"/>
<line x1="708.854" y1="429" x2="707.932" y2="646" stroke="#5a657b" stroke-width="1.5"/>
<line x1="720.5" y1="277" x2="720.285" y2="429" stroke="#bcc1ca" stroke-width="1"/>
<line x1="720.285" y1="429" x2="719.977" y2="646" stroke="#5a657b" stroke-width="1.25"/>
<line x1="732" y1="277" x2="732.215" y2="429" stroke="#bcc1ca" stroke-width="1"/>
<line x1="732.215" y1="429" x2="732.523" y2="646" stroke="#5a657b" stroke-width="1.05"/>
<line x1="743" y1="277" x2="743.646" y2="429" stroke="#bcc1ca" stroke-width="0.8"/>
<line x1="743.646" y1="429" x2="744.568" y2="646" stroke="#9aa2b0" stroke-width="0.8"/>
<line x1="754" y1="277" x2="755.076" y2="429" stroke="#bcc1ca" stroke-width="0.8"/>
<line x1="755.076" y1="429" x2="756.613" y2="646" stroke="#b8bdc6" stroke-width="0.7"/>
<line x1="765" y1="277" x2="766.722" y2="429" stroke="#bcc1ca" stroke-width="0.8"/>
<line x1="766.722" y1="429" x2="769.181" y2="646" stroke="#d0d4da" stroke-width="0.6"/>
<path d="M822 666 C825.0 666.2 828.0 667.2 831.0 668.5 C834.0 669.8 837.0 671.9 840.0 674.0 C843.0 676.1 846.0 678.5 849.0 681.0 C852.0 683.5 855.3 686.3 858.0 689.0 C860.7 691.7 862.7 694.2 865.0 697.0 C867.3 699.8 870.0 703.2 872.0 706.0 C874.0 708.8 875.5 711.2 877.0 713.5 C878.5 715.8 880.0 717.8 881.0 720.0 C882.0 722.2 883.0 725.3 883.0 727.0 C883.0 728.7 882.2 729.4 881.0 730.0 C879.8 730.6 878.2 730.8 876.0 730.5 C873.8 730.2 870.8 729.0 868.0 728.0 C865.2 727.0 862.0 725.8 859.0 724.5 C856.0 723.2 853.0 721.7 850.0 720.0 C847.0 718.3 843.8 716.3 841.0 714.5 C838.2 712.7 835.7 711.0 833.0 709.0 C830.3 707.0 827.5 704.7 825.0 702.5 C822.5 700.3 820.1 698.2 818.0 696.0 C815.9 693.8 814.0 691.2 812.5 689.0 C811.0 686.8 809.9 685.0 809.0 683.0 C808.1 681.0 807.2 679.0 807.0 677.0 C806.8 675.0 807.0 672.7 808.0 671.0 C809.0 669.3 810.7 667.8 813.0 667.0 C815.3 666.2 819.0 665.8 822.0 666.0 Z" fill="#f7f7f8"/>
<path d="M838.5 678 L824 698.5 C838 708 854 717.500 866 722 C870.500 723.500 873.500 720.500 873 716.500 C866 704 856 690.500 846.500 680.200 Z" fill="#46536b"/>
<path d="M838.5 678 L824 698.5 L828.200 700.600 L841.500 681.200 Z" fill="#e4e7eb"/>
<path d="M829 700.500 C842 708.500 855 716 866 720.200 L867 717.500 C856 712 844 704.500 832 697 Z" fill="#8791a2"/>
<path d="M846.500 681 C855 690 865 703 871.500 715.500 L868.500 717.500 C861 705 852 694 843.500 685.500 Z" fill="#7f8a9c"/>
<path d="M833 693.500 L836.500 688 C846 694 858 706 868 718.500 L866 720.500 C856 711 845 701.500 833 693.500 Z" fill="#1d2b45"/>
<path d="M836 690.500 L839.500 686 C848 692.500 859 704.500 868.500 717 L867 719 C858 709.500 847 698 836 690.500 Z" fill="#dfe2e7"/>
<path d="M840 690 C849 697 858 707 866.500 717.500" fill="none" stroke="#4a566c" stroke-width="1"/>
<circle cx="814.500" cy="674.500" r="3.3" fill="#46526a" stroke="#8e98a8" stroke-width=".8"/><path d="M812.500 674.500 h4 M814.500 672.500 v4" stroke="#c4c9d1" stroke-width="1"/>
<circle cx="877.500" cy="724.500" r="3.3" fill="#46526a" stroke="#8e98a8" stroke-width=".8"/><path d="M875.500 724.500 h4 M877.500 722.500 v4" stroke="#c4c9d1" stroke-width="1"/>
</g>
<path d="M930 440h3v6.5h-3zM930 452.5h3V459h-3zM922 448h6.5v3H922zM934.5 448H941v3h-6.5z" fill="#000"/><path d="M931 446h1v7h-1zM928 449h7v1h-7z" fill="#000" opacity=".75"/>
</svg>
<div id="vscroll"><div class="sp"></div><svg style="left:0;top:0" width="17" height="772" viewBox="1571 126 17 772"><path d="M1576.800 145 L1580.300 140.800 L1583.800 145 Z" fill="#7a7a7a"/><path d="M1576.800 889.300 L1583.800 889.300 L1580.300 893.400 Z" fill="#7a7a7a"/></svg></div><div id="rstrip"></div>
<div id="botline"></div><div id="botline2"></div>
<div id="panel"><div class="hi"></div><div id="ptitle"></div><div id="pin"></div></div>
<div class="grp" style="left:1096px;top:171px;width:441px;height:148px;"></div>
<div class="lbl" style="left:1103px;top:164px;width:50px;height:14px;"></div>
<div class="grp" style="left:1096px;top:337px;width:441px;height:90px;"></div>
<div class="lbl" style="left:1103px;top:330px;width:33px;height:14px;"></div>
<div class="grp" style="left:1096px;top:480px;width:441px;height:391px;"></div>
<div class="lbl" style="left:1103px;top:473px;width:65px;height:14px;"></div>
<div class="combo" style="left:1227px;top:191px;width:250px;height:24px;"><div class="btn"></div><div class="arr" style="top:9.5px"></div></div>
<div class="cb" style="left:1111px;top:228px;width:13px;height:13px;"><svg width="13" height="13" viewBox="0 0 13 13" style="left:-1px;top:-1px"><path d="M3.2 6.2 L5.6 9.6 L9.8 2.6" fill="none" stroke="#2a3a8c" stroke-width="1.9"/></svg></div>
<div class="cb" style="left:1111px;top:257px;width:13px;height:13px;"></div>
<div class="cb" style="left:1264px;top:257px;width:13px;height:13px;"></div>
<div class="cb" style="left:1111px;top:290px;width:13px;height:13px;"></div>
<div class="pbtn" style="left:1248px;top:285px;width:91px;height:24px;"></div>
<div class="pbtn" style="left:1454px;top:254px;width:20px;height:20px;"><div style="left:3px;top:3px;width:12px;height:12px;background:#eeeedc;border:1px solid #9a9a9a"></div></div>
<div class="combo" style="left:1156px;top:357px;width:184px;height:24px;"><div class="btn"></div><div class="arr" style="top:9.5px"></div></div>
<div class="inp" style="left:1471px;top:358px;width:30px;height:23px;"></div>
<div class="cb" style="left:1111px;top:398px;width:13px;height:13px;"><svg width="13" height="13" viewBox="0 0 13 13" style="left:-1px;top:-1px"><path d="M3.2 6.2 L5.6 9.6 L9.8 2.6" fill="none" stroke="#2a3a8c" stroke-width="1.9"/></svg></div>
<div class="pbtn" style="left:1313px;top:393px;width:104px;height:24px;"></div>
<div class="combo" style="left:1154px;top:438px;width:383px;height:24px;"><div class="btn"></div><div class="arr" style="top:9.5px"></div></div>
<div class="list" style="left:1111px;top:500px;width:411px;height:242px;"></div>
<div class="lhead" style="left:1112px;top:501px;width:409px;height:23px;"></div>
<div class="lsep" style="left:1142px;top:501px;width:1px;height:23px;"></div>
<div class="lsep" style="left:1162px;top:501px;width:1px;height:23px;"></div>
<div class="lsep" style="left:1342px;top:501px;width:1px;height:23px;"></div>
<div class="lsep" style="left:1413px;top:501px;width:1px;height:23px;"></div>
<div class="cbs" style="left:1119px;top:529px;width:11px;height:11px;"><svg width="11" height="11" viewBox="0 0 11 11" style="left:-1px;top:-1px"><path d="M2.4 5.2 L4.6 8 L8.6 2.8" fill="none" stroke="#000" stroke-width="1.9"/></svg></div>
<div class="cbs" style="left:1119px;top:548px;width:11px;height:11px;"><svg width="11" height="11" viewBox="0 0 11 11" style="left:-1px;top:-1px"><path d="M2.4 5.2 L4.6 8 L8.6 2.8" fill="none" stroke="#000" stroke-width="1.9"/></svg></div>
<div class="cbs" style="left:1119px;top:567px;width:11px;height:11px;"><svg width="11" height="11" viewBox="0 0 11 11" style="left:-1px;top:-1px"><path d="M2.4 5.2 L4.6 8 L8.6 2.8" fill="none" stroke="#000" stroke-width="1.9"/></svg></div>
<div class="cbs" style="left:1119px;top:586px;width:11px;height:11px;"><svg width="11" height="11" viewBox="0 0 11 11" style="left:-1px;top:-1px"><path d="M2.4 5.2 L4.6 8 L8.6 2.8" fill="none" stroke="#000" stroke-width="1.9"/></svg></div>
<div class="cbs" style="left:1119px;top:605px;width:11px;height:11px;"><svg width="11" height="11" viewBox="0 0 11 11" style="left:-1px;top:-1px"><path d="M2.4 5.2 L4.6 8 L8.6 2.8" fill="none" stroke="#000" stroke-width="1.9"/></svg></div>
<div class="cbs" style="left:1119px;top:624px;width:11px;height:11px;"><svg width="11" height="11" viewBox="0 0 11 11" style="left:-1px;top:-1px"><path d="M2.4 5.2 L4.6 8 L8.6 2.8" fill="none" stroke="#000" stroke-width="1.9"/></svg></div>
<div class="cbs" style="left:1119px;top:643px;width:11px;height:11px;"><svg width="11" height="11" viewBox="0 0 11 11" style="left:-1px;top:-1px"><path d="M2.4 5.2 L4.6 8 L8.6 2.8" fill="none" stroke="#000" stroke-width="1.9"/></svg></div>
<div class="cbs" style="left:1119px;top:662px;width:11px;height:11px;"><svg width="11" height="11" viewBox="0 0 11 11" style="left:-1px;top:-1px"><path d="M2.4 5.2 L4.6 8 L8.6 2.8" fill="none" stroke="#000" stroke-width="1.9"/></svg></div>
<div class="sw" style="left:1143px;top:545px;width:20px;height:19px;background:#00ffff"></div>
<div class="sw" style="left:1143px;top:564px;width:20px;height:19px;background:#ff00ff"></div>
<div class="sw" style="left:1143px;top:583px;width:20px;height:19px;background:#ffff00"></div>
<div class="sw" style="left:1143px;top:602px;width:20px;height:19px;background:#000000"></div>
<div class="sw" style="left:1143px;top:640px;width:20px;height:19px;background:#1f3f6b"></div>
<div class="sw" style="left:1143px;top:659px;width:20px;height:19px;background:#8a8a8a"></div>
<div class="combo" style="left:1192px;top:752px;width:330px;height:24px;"><div class="btn"></div><div class="arr" style="top:9.5px"></div></div>
<div class="cb" style="left:1111px;top:793px;width:13px;height:13px;"></div>
<div class="pbtn" style="left:1260px;top:791px;width:20px;height:18px;"><div style="left:3px;top:2px;width:12px;height:12px;background:#00f400;border:1px solid #86a686"></div></div>
<div class="combo dis" style="left:1291px;top:787px;width:43px;height:24px;"><div style="left:3px;top:4px;width:19px;height:15px;background:#e9e9e9"></div><div class="arr" style="top:9.5px;right:5px;border-top-color:#9a9a9a"></div></div>
<div class="pclose" style="left:1537px;top:128px;width:16px;height:16px;"><svg width="16" height="16" viewBox="0 0 16 16" style="left:-1px;top:-1px"><path d="M5.200 5.400 L11.400 11.600 M11.400 5.400 L5.200 11.600" stroke="#33335a" stroke-width="3.400"/><path d="M5.200 5.400 L11.400 11.600 M11.400 5.400 L5.200 11.600" stroke="#fff" stroke-width="1.700"/></svg></div>
<div class="" style="left:1542px;top:877.5px;width:9px;height:9px;"><div style="left:5px;top:-1px;width:2px;height:2px;background:#fff"></div><div style="left:6px;top:0px;width:2px;height:2px;background:#b4b4b4"></div><div style="left:2px;top:2px;width:2px;height:2px;background:#fff"></div><div style="left:3px;top:3px;width:2px;height:2px;background:#b4b4b4"></div><div style="left:5px;top:2px;width:2px;height:2px;background:#fff"></div><div style="left:6px;top:3px;width:2px;height:2px;background:#b4b4b4"></div><div style="left:-1px;top:5px;width:2px;height:2px;background:#fff"></div><div style="left:0px;top:6px;width:2px;height:2px;background:#b4b4b4"></div><div style="left:2px;top:5px;width:2px;height:2px;background:#fff"></div><div style="left:3px;top:6px;width:2px;height:2px;background:#b4b4b4"></div><div style="left:5px;top:5px;width:2px;height:2px;background:#fff"></div><div style="left:6px;top:6px;width:2px;height:2px;background:#b4b4b4"></div></div>
<svg style="left:0;top:42px" width="1600" height="84" viewBox="0 42 1600 84" fill="none" stroke="#cbcbcb" stroke-width="1.85" stroke-linejoin="round" font-family="'Liberation Sans',sans-serif">
<g stroke="#7a7a7a"><path d="M16 93 H30 L34 97 V111 H16 Z"/><path d="M21 93 V99.5 H29 V93" /><path d="M25.7 94.5 V98" stroke-width="1.2"/><rect x="21" y="104.5" width="8.5" height="6.5" fill="#6a6a6a"/></g>
<g><rect x="57" y="97" width="20" height="9.5" rx="2" fill="#cbcbcb"/><rect x="60.5" y="92" width="13" height="6" fill="#4b4b4b"/><rect x="60.5" y="103" width="13" height="8.3" fill="#4b4b4b"/><path d="M63.5 106 H70.5 M63.5 108.5 H70.5" stroke-width="1"/><path d="M73.5 99.7 H75" stroke="#4b4b4b" stroke-width="1"/></g>
<g stroke-width="1.6"><rect x="100.8" y="93.8" width="20.4" height="15.4"/><path d="M101 94 L111 103 L121 94 M101 109 L108.5 100.8 M121 109 L113.5 100.8" stroke-width="1.1"/></g>
<g stroke-width="2"><circle cx="151.7" cy="100.7" r="7.4"/><path d="M157 106.3 L162.3 111.6" stroke-width="2.4" stroke-linecap="round"/></g>
<path d="M277.8 94.2 H283.4 L287.4 98.2 V109.2 H277.8 Z M283.4 94.2 V98.4 H287.4" stroke-width="1.6"/>
<path d="M290.6 94.2 H296.2 L300.2 98.2 V109.2 H290.6 Z M296.2 94.2 V98.4 H300.2" stroke-width="1.6"/>
<path d="M347.2 91.2 V109 L351.4 105.3 L354.6 111.8 L357 110.6 L354 104.4 L359.6 103.6 Z" fill="#4ba5f7" stroke="none"/>
<path d="M389.4 105 V95.8 a2 2 0 0 1 4 0 V100.5 V92.8 a2 2 0 0 1 4 0 V100 V92.4 a2 2 0 0 1 4 0 V100.3 V95 a2 2 0 0 1 4 0 V105.6 c0 5 -3.200 7.900 -8 7.900 c-4 0 -6 -1.800 -8 -4.800 L384.800 103.700 c-.9 -1.600 1 -3.100 2.500 -1.700 L389.400 104.800" stroke-width="1.55"/>
<circle cx="437.5" cy="101.5" r="9.600" stroke-width="1.9"/><path d="M432.7 101.5 H442.3" stroke-width="1.9"/>
<circle cx="469.7" cy="101.5" r="9.600" stroke-width="1.9"/><path d="M464.9 101.5 H474.5 M469.7 96.7 V106.3" stroke-width="1.9"/>
<path d="M557.8 100.2 H565 L561.4 104.4 Z" fill="#cbcbcb" stroke="none"/>
<g stroke-width="1.9" stroke-linejoin="miter"><path d="M596 90 V97 H611.3 V90"/><path d="M596 114 V101.8 H606.3 L611.3 106.8 V114"/><path d="M606 101.8 V107 H611.3" stroke-width="1.3"/><path d="M598.6 111.6 H608.8 M600.4 109.6 L598.4 111.6 L600.4 113.6 M607 109.6 L609 111.6 L607 113.6" stroke-width="1"/></g>
<g><path d="M639 92.4 H650.4 L655 97 V111 H639 Z" stroke-width="1.7"/><path d="M647 98.5 V108.5 M642 103.5 H652 M645.3 100 L647 98.2 L648.7 100 M645.3 107 L647 108.8 L648.7 107 M643.6 101.8 L641.8 103.5 L643.6 105.2 M650.4 101.8 L652.2 103.5 L650.4 105.2" stroke-width="1"/></g>
<g><rect x="681.2" y="91.9" width="18" height="19.2" stroke-width="1.8"/><path d="M681 94.6 H699" stroke-width="1"/><path d="M695.8 96.6 L690.2 96.6 L695.8 102.2 Z M684.4 108.8 L684.4 103.2 L690 108.8 Z" fill="#cbcbcb" stroke="none"/><path d="M693.5 99 L690.6 101.8 M686.8 106.4 L689.6 103.6" stroke-width="2"/></g>
<g><rect x="723.3" y="92.7" width="19.6" height="7.2" rx="1" stroke-width="1.7"/><path d="M726.5 96.3 H728.5 M730.6 96.3 H732.6 M734.7 96.3 H736.7 M738.8 96.3 H740.8" stroke-width="2"/><path d="M733 102.5 V111.5 M728.6 107.5 L733 112 L737.4 107.5" stroke-width="1.7" stroke-linejoin="miter"/></g>
<g><path d="M796 92.6 c5.8 0 10.2 3.6 10.2 8.2 s-4.4 8.2 -10.2 8.2 c-1.4 0 -2.6 -.2 -3.8 -.5 L787.6 112.2 L789.4 107.2 c-2.2 -1.5 -3.6 -3.8 -3.6 -6.4 c0 -4.6 4.4 -8.2 10.2 -8.2 Z" stroke-width="1.6" fill="#5e5e5e"/><path d="M791 99.6 H801.5 M791.5 102 H800" stroke-width="1"/></g>
<g><rect x="833.8" y="108" width="16.4" height="4.7" fill="#6c6c6c" stroke="none"/><path d="M832.6 106.2 L845 92.6 c1.6 -1.6 5.6 1.6 4 3.8 L837.2 110 Z" stroke-width="1.5" fill="#5a5a5a"/><path d="M832.6 106.2 L837.2 110 L834 111.2 L828 112 L830.2 108.6 Z" fill="#cbcbcb" stroke="none"/><path d="M834.8 104.2 L839.2 108" stroke-width="1.3"/></g>
<g stroke="#4ba5f7"><path d="M875.6 97 V94.4 H883 L887.4 98.8 V110 H873.8 V103" stroke-width="2"/><path d="M883 94.4 V99 H887.4" stroke-width="1.2"/><rect x="871" y="97.4" width="8.2" height="4.4" rx="1.2" fill="#4ba5f7" stroke="none"/><path d="M892 94 V99.4 M892 104.8 V112.6" stroke-width="1.5"/><circle cx="892" cy="102.1" r="1.9" stroke-width="1.3"/></g>
<g><rect x="913" y="96.5" width="18" height="8" rx="1.6" fill="#cbcbcb" stroke="none"/><rect x="916.6" y="91.8" width="11" height="5.4" fill="#4b4b4b" stroke-width="1.5"/><rect x="916.6" y="101.8" width="11" height="6.6" fill="#4b4b4b" stroke-width="1.5"/><path d="M918.6 104.2 H923 M918.6 106.2 H922.4" stroke-width="1"/><circle cx="929.3" cy="105.8" r="4.3" fill="#4b4b4b" stroke-width="1.5"/><path d="M932.5 109 L936 112.6" stroke-width="2" stroke-linecap="round"/><path d="M927.6 107.4 L930.8 104.2" stroke-width=".9"/></g>
<g><rect x="958.2" y="92.2" width="14" height="8" stroke-width="1.7"/><path d="M961 95 H969.4 M961 97.3 H969.4" stroke-width="1"/><rect x="958.6" y="103.6" width="7.2" height="6.6" stroke-width="1.6"/><rect x="960.6" y="105.4" width="3.2" height="3" fill="#7a7a7a" stroke="none"/><path d="M968 110.4 L976.2 102 c1 -1 3 1 2.2 2 L970 112.4 L967 113.4 Z" stroke-width="1.2" fill="#5e5e5e"/></g>
<g><rect x="1004" y="96.5" width="4" height="12" fill="#5e5e5e" stroke="none"/><rect x="1008" y="96.5" width="3.6" height="12" fill="#777" stroke="none"/><rect x="1011.6" y="96.5" width="3.6" height="12" fill="#929292" stroke="none"/><rect x="1015.2" y="96.5" width="3.4" height="12" fill="#b2b2b2" stroke="none"/><rect x="1002" y="96" width="17" height="13" rx="1.4" stroke-width="1.8"/></g>
<g><path d="M1052 110.8 H1044.2 V92.2 H1053.4 L1058.6 97.4 V100.6" stroke-width="1.7"/><path d="M1053.4 92.2 V97.6 H1058.6" stroke-width="1.3"/><path d="M1055.8 102 V110 H1063.6 M1053.4 104.6 H1061 V113" stroke-width="1.5" stroke-linejoin="miter"/></g>
<g><path d="M1089.2 92.2 H1098.6 L1103.8 97.4 V110.8 H1089.2 Z" stroke-width="1.7"/><path d="M1098.6 92.2 V97.6 H1103.8" stroke-width="1.3"/><circle cx="1096.5" cy="104" r="2.3" stroke-width="1"/><path d="M1096.5 100 V108 M1092.5 104 H1100.5" stroke-width="1"/></g>
<g><path d="M1144.6 106 V111.4 H1130.4 V93.2 H1139.6 L1144.4 98" stroke-width="1.7"/><path d="M1139.6 93.2 V98.4 H1143.6" stroke-width="1.2"/><path d="M1133 108.3 H1137.8" stroke-width="1"/><path d="M1141.4 106.6 L1149.6 98 c1 -1 3 .8 2.2 2 L1143.6 108.6 L1140.4 109.6 Z" stroke-width="1.2" fill="#5e5e5e"/></g>
<g><path d="M1179.6 95 V91.6 c0 -1.6 5.8 -1.6 5.8 0 V95" fill="#cbcbcb" stroke-width="1"/><rect x="1177.6" y="95" width="9.8" height="4.2" rx="1.4" fill="#cbcbcb" stroke="none"/><path d="M1179.4 99.4 c-2.6 1.2 -4.6 3.6 -4.6 6.6 V111 c0 1 .8 1.8 1.8 1.8 H1188.4 c1 0 1.8 -.8 1.8 -1.8 V106 c0 -3 -2 -5.4 -4.6 -6.6" stroke-width="1.6"/><path d="M1176 107 H1189 V111.6 H1176 Z" fill="#8e8e8e" stroke="none"/><path d="M1181.8 99.4 V110.8 M1183.4 99.4 V110.8" stroke-width=".8"/></g>
<g><rect x="1218.8" y="92.9" width="14.2" height="19" fill="#5e5e5e" stroke-width="1.7"/><rect x="1215" y="98.9" width="13" height="6.8" rx="1.6" fill="#cbcbcb" stroke="none"/></g>
<g><path d="M1264.6 107.8 H1258.2 V92.2 H1266.6 L1269.4 95" stroke-width="1.6"/><path d="M1266.2 96.6 H1274.4 L1279 101.2 V111.8 H1266.2 Z" fill="#4b4b4b" stroke-width="1.6"/><path d="M1274.4 96.6 V101.4 H1279" stroke-width="1.1"/><rect x="1262" y="99" width="8.2" height="4.8" rx="1.2" fill="#cbcbcb" stroke="none"/></g>
<g><rect x="1301.2" y="97.2" width="21" height="9.8" rx="1" fill="#5e5e5e" stroke-width="1.7"/><path d="M1305.4 106.5 V102.6 M1308.6 106.5 V104 M1311.8 106.5 V102.6 M1315 106.5 V104 M1318.2 106.5 V102.6" stroke-width="1"/></g>
<g><path d="M1346.4 92.2 H1355.8 L1361 97.4 V110.8 H1346.4 Z" stroke-width="1.7"/><path d="M1355.8 92.2 V97.6 H1361" stroke-width="1.2"/><circle cx="1355" cy="105" r="2.6" fill="#9a9a9a" stroke="#9a9a9a" stroke-width="1.8" stroke-dasharray="1.4 1"/><path d="M1367 100 H1374.2 L1370.6 104.2 Z" fill="#cbcbcb" stroke="none"/></g>
<g><path d="M1405.6 90 H1410.4 V96.4 H1414 L1408 102.4 L1402 96.4 H1405.6 Z" fill="#cbcbcb" stroke="none"/><path d="M1399.4 99.4 V110.8 H1416.8 V99.4" stroke-width="1.7"/><rect x="1400" y="104.4" width="16.4" height="6.2" fill="#cbcbcb" stroke="none"/>
<rect x="1400" y="104.4" width="2.05" height="2.05" fill="#4b4b4b" stroke="none"/>
<rect x="1404.1" y="104.4" width="2.05" height="2.05" fill="#4b4b4b" stroke="none"/>
<rect x="1408.2" y="104.4" width="2.05" height="2.05" fill="#4b4b4b" stroke="none"/>
<rect x="1412.3" y="104.4" width="2.05" height="2.05" fill="#4b4b4b" stroke="none"/>
<rect x="1402.05" y="106.45" width="2.05" height="2.05" fill="#4b4b4b" stroke="none"/>
<rect x="1406.15" y="106.45" width="2.05" height="2.05" fill="#4b4b4b" stroke="none"/>
<rect x="1410.25" y="106.45" width="2.05" height="2.05" fill="#4b4b4b" stroke="none"/>
<rect x="1414.35" y="106.45" width="2.05" height="2.05" fill="#4b4b4b" stroke="none"/>
<rect x="1400" y="108.5" width="2.05" height="2.05" fill="#4b4b4b" stroke="none"/>
<rect x="1404.1" y="108.5" width="2.05" height="2.05" fill="#4b4b4b" stroke="none"/>
<rect x="1408.2" y="108.5" width="2.05" height="2.05" fill="#4b4b4b" stroke="none"/>
<rect x="1412.3" y="108.5" width="2.05" height="2.05" fill="#4b4b4b" stroke="none"/>
</g>
<path d="M1443.6 95 L1455.4 98.6 L1451.6 101 L1457 106.4 L1454.8 108.6 L1449.4 103.2 L1447 107 Z" fill="#f2f2f2" stroke="#6a2f9a" stroke-width="1" stroke-linejoin="miter"/>
<g stroke="none"><rect x="1483.8" y="92.6" width="19.6" height="20" fill="#f4f4f4"/><rect x="1483.8" y="92.6" width="19.6" height="2.6" fill="#8cc63f"/><rect x="1483.8" y="92.6" width="4.4" height="2.6" fill="#f2e600"/><path d="M1483.8 112.6 H1503.4 V110 L1496 112 Z" fill="#c8c8c8"/><circle cx="1493.6" cy="102.8" r="4.6" fill="#e6d8f2" stroke="#9a6cc0" stroke-width="1.3"/><path d="M1497 106 L1503.6 111.6" stroke="#7a3cae" stroke-width="2.2"/></g>
<circle cx="1530" cy="102.1" r="2" fill="#cbcbcb" stroke="none"/>
<circle cx="1537" cy="102.1" r="2" fill="#cbcbcb" stroke="none"/>
<circle cx="1544" cy="102.1" r="2" fill="#cbcbcb" stroke="none"/>
<circle cx="1503.5" cy="60.6" r="9.6" stroke-width="1.9"/>
<text x="1503.5" y="65.6" font-size="14" font-weight="700" fill="#cbcbcb" stroke="none" text-anchor="middle">?</text>
<path d="M317.2 57 L323.6 63.6 M323.6 57 L317.2 63.6" stroke="#e0e0e0" stroke-width="1.9"/>
</svg>
<svg style="left:0;top:126px" width="60" height="170" viewBox="0 126 60 170" fill="none" stroke="#cbcbcb" stroke-width="1.9" stroke-linejoin="round">
<path d="M18.6 150.4 H14.8 V163.8 H26.4 V160.4" stroke-width="1.6"/><path d="M20.6 144.2 H27.6 L32.4 149 V159.4 H20.6 Z" stroke-width="1.7"/><path d="M27.6 144.2 V149.2 H32.4" stroke-width="1.2"/>
<path d="M16 181.6 H28.2 V201 L22.1 195.6 L16 201 Z" stroke-width="1.8" stroke-linejoin="miter"/>
<path d="M27.6 222.4 L19.2 230.8 c-2 2 -4.8 -.6 -2.8 -2.8 L25.6 218.8 c3.4 -3.4 8.2 1.2 4.8 4.8 L20.6 233.4 c-4.6 4.6 -11 -1.6 -6.400 -6.400 L22 219.200" stroke-width="1.6" stroke-linecap="round"/>
<path d="M17 258 V255.2 H24.200 L29 260 V265 M22.600 273.600 H14.200 V264.600" stroke-width="1.7"/><path d="M24.200 255.200 V260.200 H29" stroke-width="1.2"/><rect x="10" y="258.600" width="9" height="5" rx="1.200" fill="#cbcbcb" stroke="none"/><circle cx="28.600" cy="271.600" r="5.400" fill="#cbcbcb" stroke="none"/><path d="M28.600 270.600 V274.600 M28.600 268.200 V269.400" stroke="#4b4b4b" stroke-width="1.600"/>
</svg>
<svg style="left:45px;top:500px" width="12" height="24" viewBox="0 0 12 24"><path d="M8.600 6.600 V17.400 L3 12 Z" fill="#d8d8d8"/></svg>
<svg style="left:1588px;top:500px" width="12" height="24" viewBox="0 0 12 24"><path d="M8.600 6.600 V17.400 L3 12 Z" fill="#d8d8d8"/></svg>
<span class="t" style="left:19.99px;top:5.04px;font-size:12px;color:#000;font-weight:400;transform:scaleX(1.0229)">Corel duotone.pdf - Adobe Acrobat Pro DC</span>
<span class="t" style="left:5.86px;top:26.04px;font-size:12px;color:#000;font-weight:400;transform:scaleX(0.9895)">File</span>
<span class="t" style="left:37.92px;top:26.04px;font-size:12px;color:#000;font-weight:400;transform:scaleX(0.9695)">Edit</span>
<span class="t" style="left:73.00px;top:26.04px;font-size:12px;color:#000;font-weight:400;transform:scaleX(0.9695)">View</span>
<span class="t" style="left:110.99px;top:26.04px;font-size:12px;color:#000;font-weight:400;transform:scaleX(0.9720)">Certified PDF</span>
<span class="t" style="left:193.96px;top:26.04px;font-size:12px;color:#000;font-weight:400;transform:scaleX(0.9896)">PitStop Pro</span>
<span class="t" style="left:268.00px;top:26.04px;font-size:12px;color:#000;font-weight:400;transform:scaleX(1.0073)">Window</span>
<span class="t" style="left:324.96px;top:26.04px;font-size:12px;color:#000;font-weight:400;transform:scaleX(1.0144)">Help</span>
<span class="t" style="left:12.95px;top:52.31px;font-size:16.5px;color:#d2d2d2;font-weight:400;transform:scaleX(1.0690);-webkit-text-stroke:.38px #d2d2d2">Home</span>
<span class="t" style="left:85.00px;top:52.31px;font-size:16.5px;color:#d2d2d2;font-weight:400;transform:scaleX(1.1166);-webkit-text-stroke:.38px #d2d2d2">Tools</span>
<span class="t" style="left:186.99px;top:54.38px;font-size:14px;color:#e0e0e0;font-weight:400;transform:scaleX(1.0063)">Corel duotone.pdf</span>
<span class="t" style="left:1532.94px;top:52.31px;font-size:16.5px;color:#f2f2f2;font-weight:400;transform:scaleX(1.1110);-webkit-text-stroke:.38px #f2f2f2">Sign In</span>
<span class="t" style="left:216.50px;top:96.04px;font-size:12px;color:#f0f0f0;font-weight:400;transform:scaleX(0.8972)">1</span>
<span class="t" style="left:239.97px;top:96.04px;font-size:12px;color:#e8e8e8;font-weight:400;transform:scaleX(1.3536)">/ 1</span>
<span class="t" style="left:507.90px;top:95.74px;font-size:12px;color:#f0f0f0;font-weight:400;transform:scaleX(1.0030)">85,1%</span>
<span class="t" style="left:1080.59px;top:129.54px;font-size:12px;color:#000;font-weight:400;transform:scaleX(1.0166)">Output Preview</span>
<span class="t" style="left:1103.98px;top:166.04px;font-size:12px;color:#000;font-weight:400;transform:scaleX(1.0072)">Simulate</span>
<span class="t" style="left:1109.98px;top:198.04px;font-size:12px;color:#000;font-weight:400;transform:scaleX(1.0135)">Simulation Profile:</span>
<span class="t" style="left:1230.99px;top:197.04px;font-size:12px;color:#000;font-weight:400;transform:scaleX(0.9781)">Output Intent: ISO Coated v2 (ECI)</span>
<span class="t" style="left:1125.98px;top:229.04px;font-size:12px;color:#000;font-weight:400;transform:scaleX(1.0229)">Simulate Overprinting</span>
<span class="t" style="left:1267.98px;top:229.04px;font-size:12px;color:#000;font-weight:400;transform:scaleX(0.9841)">Page has Overprint:</span>
<span class="t" style="left:1390.86px;top:229.04px;font-size:12px;color:#000;font-weight:400;transform:scaleX(1.1917)">No</span>
<span class="t" style="left:1125.99px;top:258.04px;font-size:12px;color:#000;font-weight:400;transform:scaleX(0.9820)">Simulate Paper Color</span>
<span class="t" style="left:1278.99px;top:258.04px;font-size:12px;color:#000;font-weight:400;transform:scaleX(0.9747)">Set Page Background Color</span>
<span class="t" style="left:1125.99px;top:291.04px;font-size:12px;color:#000;font-weight:400;transform:scaleX(0.9827)">Simulate Black Ink</span>
<span class="t" style="left:1257.98px;top:291.04px;font-size:12px;color:#000;font-weight:400;transform:scaleX(1.0197)">Ink Manager</span>
<span class="t" style="left:1103.96px;top:332.04px;font-size:12px;color:#000;font-weight:400;transform:scaleX(1.0001)">Show</span>
<span class="t" style="left:1109.93px;top:364.04px;font-size:12px;color:#000;font-weight:400;transform:scaleX(0.9934)">Show:</span>
<span class="t" style="left:1161.00px;top:363.04px;font-size:12px;color:#000;font-weight:400;transform:scaleX(1.1299)">All</span>
<span class="t" style="left:1356.00px;top:364.04px;font-size:12px;color:#000;font-weight:400;transform:scaleX(1.0155)">Warning Opacity:</span>
<span class="t" style="left:1471.86px;top:363.04px;font-size:12px;color:#000;font-weight:400;transform:scaleX(0.9555)">100</span>
<span class="t" style="left:1512.00px;top:364.04px;font-size:12px;color:#000;font-weight:400;transform:scaleX(0.8433)">%</span>
<span class="t" style="left:1125.99px;top:399.04px;font-size:12px;color:#000;font-weight:400;transform:scaleX(1.0018)">Show art, trim, &amp; bleed boxes</span>
<span class="t" style="left:1324.97px;top:399.04px;font-size:12px;color:#000;font-weight:400;transform:scaleX(0.9302)">Set Page Boxes</span>
<span class="t" style="left:1094.95px;top:445.04px;font-size:12px;color:#000;font-weight:400;transform:scaleX(1.0017)">Preview:</span>
<span class="t" style="left:1157.98px;top:444.04px;font-size:12px;color:#000;font-weight:400;transform:scaleX(0.9683)">Separations</span>
<span class="t" style="left:1103.97px;top:475.04px;font-size:12px;color:#000;font-weight:400;transform:scaleX(0.9847)">Separations</span>
<span class="t" style="left:1167.93px;top:508.04px;font-size:12px;color:#000;font-weight:400;transform:scaleX(1.0661)">Name</span>
<span class="t" style="left:1167.99px;top:530.04px;font-size:12px;color:#000;font-weight:400;transform:scaleX(0.9371)">Process Plates</span>
<span class="t" style="left:1167.97px;top:549.04px;font-size:12px;color:#000;font-weight:400;transform:scaleX(0.9646)">Process Cyan</span>
<span class="t" style="left:1348.00px;top:549.04px;font-size:12px;color:#000;font-weight:400;transform:scaleX(0.9802)">0%</span>
<span class="t" style="left:1167.99px;top:568.04px;font-size:12px;color:#000;font-weight:400;transform:scaleX(0.9745)">Process Magenta</span>
<span class="t" style="left:1348.00px;top:568.04px;font-size:12px;color:#000;font-weight:400;transform:scaleX(0.9802)">0%</span>
<span class="t" style="left:1167.99px;top:587.04px;font-size:12px;color:#000;font-weight:400;transform:scaleX(0.9789)">Process Yellow</span>
<span class="t" style="left:1348.00px;top:587.04px;font-size:12px;color:#000;font-weight:400;transform:scaleX(0.9802)">0%</span>
<span class="t" style="left:1167.99px;top:606.04px;font-size:12px;color:#000;font-weight:400;transform:scaleX(0.9472)">Process Black</span>
<span class="t" style="left:1348.00px;top:606.04px;font-size:12px;color:#000;font-weight:400;transform:scaleX(0.9802)">0%</span>
<span class="t" style="left:1167.96px;top:625.04px;font-size:12px;color:#000;font-weight:400;transform:scaleX(0.9788)">Spot Plates</span>
<span class="t" style="left:1167.98px;top:644.04px;font-size:12px;color:#000;font-weight:400;transform:scaleX(0.9606)">PANTONE 2955 C</span>
<span class="t" style="left:1346.95px;top:644.04px;font-size:12px;color:#000;font-weight:400;transform:scaleX(1.0006)">67%</span>
<span class="t" style="left:1167.98px;top:663.04px;font-size:12px;color:#000;font-weight:400;transform:scaleX(0.9651)">PANTONE 877 C</span>
<span class="t" style="left:1346.95px;top:663.04px;font-size:12px;color:#000;font-weight:400;transform:scaleX(1.0006)">67%</span>
<span class="t" style="left:1169.00px;top:682.04px;font-size:12px;color:#000;font-weight:400;transform:scaleX(0.9840)">Total Area Coverage</span>
<span class="t" style="left:1346.96px;top:682.04px;font-size:12px;color:#000;font-weight:400;transform:scaleX(0.9783)">134%</span>
<span class="t" style="left:1109.97px;top:759.04px;font-size:12px;color:#000;font-weight:400;transform:scaleX(0.9485)">Sample Size:</span>
<span class="t" style="left:1195.99px;top:758.04px;font-size:12px;color:#000;font-weight:400;transform:scaleX(0.9949)">Point Sample</span>
<span class="t" style="left:1127.00px;top:794.04px;font-size:12px;color:#000;font-weight:400;transform:scaleX(0.9840)">Total Area Coverage</span>
<span class="t" style="left:1295.00px;top:794.04px;font-size:12px;color:#8a8a8a;font-weight:400;transform:scaleX(0.8986)">280</span>
<span class="t" style="left:1344.00px;top:794.04px;font-size:12px;color:#000;font-weight:400;transform:scaleX(0.8433)">%</span>
<span class="t" style="left:1109.98px;top:824.04px;font-size:12px;color:#000;font-weight:400;transform:scaleX(0.9689)">Page has Transparency:</span>
<span class="t" style="left:1255.86px;top:824.04px;font-size:12px;color:#000;font-weight:400;transform:scaleX(1.1917)">No</span>
<span class="t" style="left:1111.00px;top:849.04px;font-size:12px;color:#000;font-weight:400;transform:scaleX(0.9762)">Transparency Blending Color Space:</span>
<span class="t" style="left:1327.93px;top:849.04px;font-size:12px;color:#000;font-weight:400;transform:scaleX(1.0858)">None</span>

</body></html>
